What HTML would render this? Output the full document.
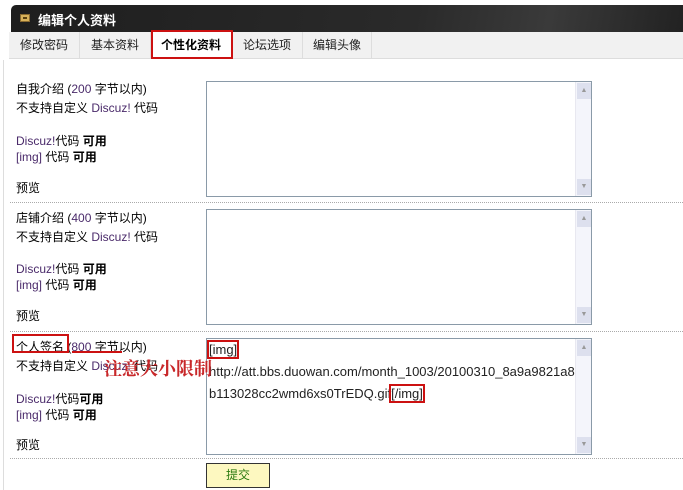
<!DOCTYPE html>
<html><head><meta charset="utf-8"><style>
*{margin:0;padding:0;box-sizing:border-box}
body{width:683px;height:490px;background:#fff;position:relative;overflow:hidden;font-family:"Liberation Sans","Noto Sans CJK SC",sans-serif;font-size:12px;color:#000}
.a{position:absolute;white-space:nowrap}
.hdr{left:11px;top:5px;width:672px;height:27px;background:linear-gradient(100deg,#1e1e1e 0%,#2a2a2a 60%,#3a3a3a 80%,#222 100%);border-radius:5px 0 0 0}
.hdr span{position:absolute;left:27px;top:5px;color:#fff;font-weight:bold;font-size:13px}
.ico{left:20px;top:14px;width:10px;height:8px;background:#d8b25a;border:1px solid #8a6a30}
.ico:after{content:"";position:absolute;left:2px;top:2px;width:4px;height:2px;background:#5a4010}
.tabs{left:9px;top:32px;width:674px;height:27px;background:#f1f1f1;border-bottom:1px solid #ddd}
.tab{position:absolute;top:0;height:27px;line-height:27px;text-align:center;border-right:1px solid #ddd;color:#222}
.sep{position:absolute;left:10px;width:673px;border-top:1px dotted #aaa}
.ta{position:absolute;left:206px;width:386px;border:1px solid #8a9aa8;background:#fff}
.sb{position:absolute;right:0;top:0;bottom:0;width:16px;background:#f4f5fb;border-left:1px solid #e8e8f0}
.sb i{position:absolute;left:1px;width:14px;height:16px;background:#dde0ee;font-style:normal;font-size:7px;color:#999;text-align:center;line-height:16px}
.p{color:#4a2a6a}
.red{position:absolute;border:2px solid #cc1111}
.rb{outline:2px solid #cc1111;outline-offset:0}
</style></head><body>
<div class="a" style="left:3px;top:60px;width:1px;height:430px;background:#ddd"></div>
<div class="a hdr"><span>编辑个人资料</span></div>
<div class="a ico"></div>
<div class="a tabs">
<div class="tab" style="left:0;width:71px">修改密码</div>
<div class="tab" style="left:71px;width:71px">基本资料</div>
<div class="tab" style="left:142px;width:81px;font-weight:bold;background:#fff;color:#000">个性化资料</div>
<div class="tab" style="left:223px;width:71px">论坛选项</div>
<div class="tab" style="left:294px;width:69px">编辑头像</div>
</div>
<div class="red" style="left:151px;top:30px;width:82px;height:29px"></div>

<div class="a" style="left:16px;top:80px">自我介绍 (<span class="p">200</span> 字节以内)</div>
<div class="a" style="left:16px;top:99px">不支持自定义 <span class="p">Discuz!</span> 代码</div>
<div class="a" style="left:16px;top:132px"><span class="p">Discuz!</span>代码 <b>可用</b></div>
<div class="a" style="left:16px;top:148px"><span class="p">[img]</span> 代码 <b>可用</b></div>
<div class="a" style="left:16px;top:179px">预览</div>
<div class="ta" style="top:81px;height:116px"><div class="sb"><i style="top:1px">▲</i><i style="bottom:1px">▼</i></div></div>
<div class="sep" style="top:202px"></div>

<div class="a" style="left:16px;top:209px">店铺介绍 (<span class="p">400</span> 字节以内)</div>
<div class="a" style="left:16px;top:228px">不支持自定义 <span class="p">Discuz!</span> 代码</div>
<div class="a" style="left:16px;top:260px"><span class="p">Discuz!</span>代码 <b>可用</b></div>
<div class="a" style="left:16px;top:276px"><span class="p">[img]</span> 代码 <b>可用</b></div>
<div class="a" style="left:16px;top:307px">预览</div>
<div class="ta" style="top:209px;height:116px"><div class="sb"><i style="top:1px">▲</i><i style="bottom:1px">▼</i></div></div>
<div class="sep" style="top:331px"></div>

<div class="a" style="left:16px;top:338px">个人签名 (<span class="p">800</span> 字节以内)</div>
<div class="a" style="left:16px;top:357px">不支持自定义 <span class="p">Discuz!</span> 代码</div>
<div class="a" style="left:16px;top:390px"><span class="p">Discuz!</span>代码<b>可用</b></div>
<div class="a" style="left:16px;top:406px"><span class="p">[img]</span> 代码 <b>可用</b></div>
<div class="a" style="left:16px;top:436px">预览</div>
<div class="ta" style="top:338px;height:117px"><div class="sb"><i style="top:1px">▲</i><i style="bottom:1px">▼</i></div></div>
<div class="a" style="left:209px;top:339px;line-height:22px;color:#222;font-size:13px"><span class="rb">[img]</span><br>http://att.bbs.duowan.com/month_1003/20100310_8a9a9821a8<br>b113028cc2wmd6xs0TrEDQ.gif<span class="rb">[/img]</span></div>
<div class="red" style="left:12px;top:334px;width:57px;height:19px"></div>
<div class="a" style="left:72px;top:351px;width:50px;height:2px;background:#cc1111"></div>
<div class="a" style="left:104px;top:355px;font-family:'Noto Serif CJK SC',serif;font-weight:bold;font-size:18px;color:#c8282a">注意大小限制</div>
<div class="sep" style="top:458px"></div>

<div class="a" style="left:206px;top:463px;width:64px;height:25px;background:#fdf8c0;border:1px solid #333;text-align:center;line-height:23px;color:#2a7a10">提交</div>
</body></html>
